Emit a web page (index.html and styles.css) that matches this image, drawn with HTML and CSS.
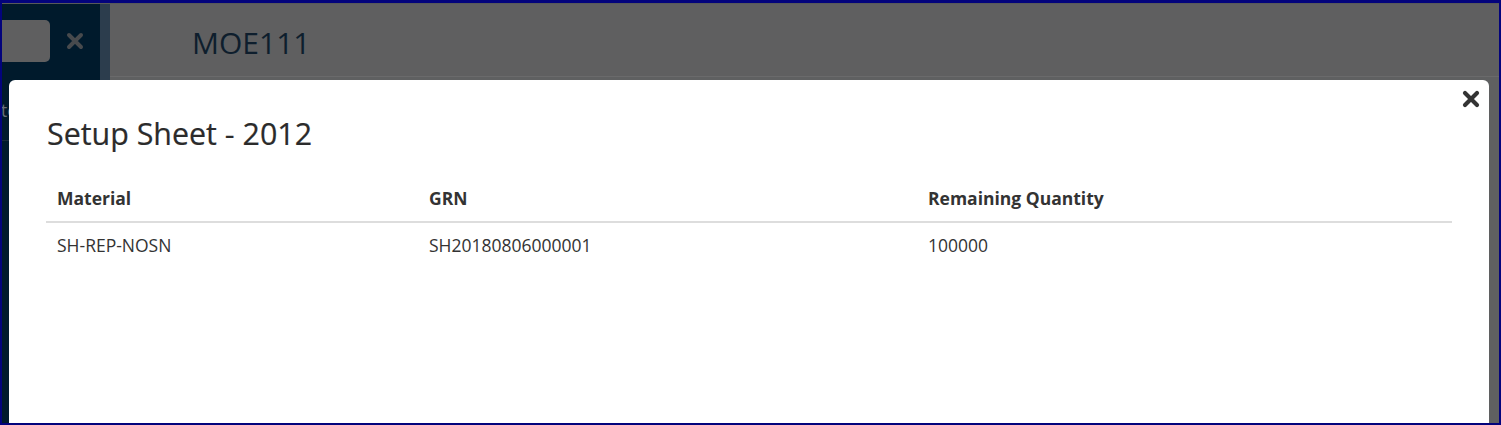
FILE: index.html
```html
<!DOCTYPE html>
<html lang="en">
<head>
<meta charset="utf-8">
<title>Setup Sheet - 2012</title>
<link rel="stylesheet" href="styles.css">
</head>
<body>
<div class="app">
  <aside class="sidebar">
    <div class="sidebar-top">
      <div class="search-box"></div>
      <span class="search-clear">
        <svg width="18" height="18" viewBox="0 0 18 18"><path d="M3 3L15 15M15 3L3 15" stroke="#474a4d" stroke-width="4" stroke-linecap="round"/></svg>
      </span>
    </div>
    <ul class="nav">
      <li class="nav-item">te</li>
    </ul>
  </aside>
  <main class="main">
    <header class="main-header">
      <h1 class="page-title">MOE111</h1>
    </header>
    <div class="main-body"></div>
  </main>
</div>

<div class="modal">
  <button class="modal-close" aria-label="Close">
    <svg width="18" height="18" viewBox="0 0 18 18"><path d="M3 3L15 15M15 3L3 15" stroke="#333" stroke-width="4.2" stroke-linecap="round"/></svg>
  </button>
  <h3 class="modal-title">Setup Sheet - 2012</h3>
  <table class="data-table">
    <thead>
      <tr>
        <th class="col-material">Material</th>
        <th class="col-grn">GRN</th>
        <th>Remaining Quantity</th>
      </tr>
    </thead>
    <tbody>
      <tr>
        <td>SH-REP-NOSN</td>
        <td>SH20180806000001</td>
        <td>100000</td>
      </tr>
    </tbody>
  </table>
</div>
</body>
</html>
```

FILE: styles.css
```css
* { box-sizing: border-box; }

html, body {
  margin: 0;
  padding: 0;
}

body {
  width: 1501px;
  height: 425px;
  overflow: hidden;
  border-style: solid;
  border-color: #03037c;
  border-width: 3px 2px 2px 2px;
  font-family: "Open Sans", "Liberation Sans", sans-serif;
  position: relative;
  background: #5f5f60;
}

.app {
  display: flex;
  height: 100%;
  border-top: 1px solid #58595a;
}

.sidebar {
  width: 108px;
  background: #001a2c;
  border-right: 10px solid #2c3d4d;
  flex-shrink: 0;
}

.sidebar-top {
  display: flex;
  align-items: center;
  padding-top: 16px;
  height: 58px;
}

.search-box {
  width: 48px;
  height: 42px;
  background: #5f5f60;
  border-radius: 0 5px 5px 0;
}

.search-clear {
  display: flex;
  margin-left: 16px;
}

.nav {
  list-style: none;
  margin: 0;
  padding: 0;
  margin-top: 31px;
}

.nav-item {
  font-size: 17.5px;
  line-height: 25px;
  color: #67717c;
  padding: 5px 0 17px 0;
  margin-left: -1px;
  border-bottom: 1px solid #1a2c3b;
}

.main {
  flex: 1;
  display: flex;
  flex-direction: column;
}

.main-header {
  height: 73px;
  border-bottom: 1px solid #6a6a6b;
  padding-left: 82px;
  display: flex;
  align-items: center;
}

.page-title {
  margin: 0;
  font-size: 30px;
  font-weight: 400;
  color: #0e1e2d;
  line-height: 1;
  padding-top: 6px;
}

.main-body {
  flex: 1;
  background: #5f6061;
}

.modal {
  position: absolute;
  left: 7px;
  top: 77px;
  right: 10px;
  bottom: 0;
  background: #ffffff;
  border-radius: 6px 6px 0 0;
  padding: 37px 37px 0 37px;
}

.modal-close {
  position: absolute;
  top: 10px;
  right: 9px;
  width: 18px;
  height: 18px;
  padding: 0;
  border: 0;
  background: transparent;
  display: flex;
}

.modal-title {
  margin: 0 0 26px 1px;
  font-size: 30.4px;
  line-height: 33px;
  font-weight: 400;
  color: #2b2b2b;
  -webkit-text-stroke: 0.2px #2b2b2b;
}

.data-table {
  width: 100%;
  border-collapse: collapse;
  table-layout: fixed;
  font-size: 17.5px;
  line-height: 25px;
  color: #333333;
}

.data-table th,
.data-table td {
  text-align: left;
  padding: 10px 11px;
  vertical-align: bottom;
}

.data-table th {
  font-weight: 700;
  border-bottom: 2.5px solid #dddddd;
}

.col-material { width: 372px; }
.col-grn { width: 499px; }
```
